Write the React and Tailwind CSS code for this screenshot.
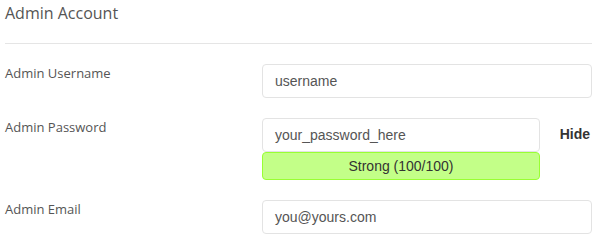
export default function App() {
  const label = "text-[13px] text-[#555] leading-[18px]";
  const input =
    "h-[34px] border border-[#e3e3e3] rounded-[4px] bg-white px-[12px] flex items-center text-[14px] text-[#555] font-['Liberation_Sans',Arial,sans-serif]";
  return (
    <div className="w-[605px] h-[244px] bg-white font-['Open_Sans',sans-serif] overflow-hidden">
      <div className="pl-[5px] pr-[13px]">
        <div className="h-[44px] border-b border-[#e5e5e5] pt-[2px]">
          <h2 className="text-[16px] leading-[22px] text-[#555]">Admin Account</h2>
        </div>
        <div className="flex pt-[20px]">
          <div className={"w-[257px] " + label}>Admin Username</div>
          <div className="flex-1">
            <div className={input}>username</div>
          </div>
        </div>
        <div className="flex pt-[20px]">
          <div className={"w-[257px] " + label}>Admin Password</div>
          <div className="w-[278px]">
            <div className={input}>your_password_here</div>
            <div className="h-[28px] border border-[#99ff33] rounded-[4px] bg-[#c3ff88] flex items-center justify-center text-[14px] text-[#333] font-['Liberation_Sans',Arial,sans-serif]">
              Strong (100/100)
            </div>
          </div>
          <div className="flex-1 flex justify-end">
            <span className="h-[32px] mr-[2px] flex items-center font-bold text-[14px] text-[#333] font-['Liberation_Sans',Arial,sans-serif]">Hide</span>
          </div>
        </div>
        <div className="flex pt-[20px]">
          <div className={"w-[257px] " + label}>Admin Email</div>
          <div className="flex-1">
            <div className={input}>you@yours.com</div>
          </div>
        </div>
      </div>
    </div>
  );
}
